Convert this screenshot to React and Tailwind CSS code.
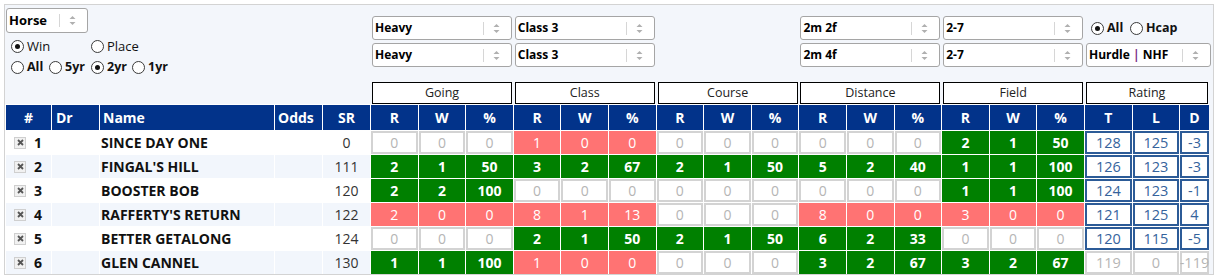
import React from 'react';

const rows = [
  {
    n: 1, name: 'SINCE DAY ONE', sr: 0,
    stats: [['n', 0, 0, 0], ['r', 1, 0, 0], ['n', 0, 0, 0], ['n', 0, 0, 0], ['g', 2, 1, 50]],
    rating: [128, 125, -3], muted: false,
  },
  {
    n: 2, name: "FINGAL'S HILL", sr: 111,
    stats: [['g', 2, 1, 50], ['g', 3, 2, 67], ['g', 2, 1, 50], ['g', 5, 2, 40], ['g', 1, 1, 100]],
    rating: [126, 123, -3], muted: false,
  },
  {
    n: 3, name: 'BOOSTER BOB', sr: 120,
    stats: [['g', 2, 2, 100], ['n', 0, 0, 0], ['n', 0, 0, 0], ['n', 0, 0, 0], ['g', 1, 1, 100]],
    rating: [124, 123, -1], muted: false,
  },
  {
    n: 4, name: "RAFFERTY'S RETURN", sr: 122,
    stats: [['r', 2, 0, 0], ['r', 8, 1, 13], ['n', 0, 0, 0], ['r', 8, 0, 0], ['r', 3, 0, 0]],
    rating: [121, 125, 4], muted: false,
  },
  {
    n: 5, name: 'BETTER GETALONG', sr: 124,
    stats: [['n', 0, 0, 0], ['g', 2, 1, 50], ['g', 2, 1, 50], ['g', 6, 2, 33], ['n', 0, 0, 0]],
    rating: [120, 115, -5], muted: false,
  },
  {
    n: 6, name: 'GLEN CANNEL', sr: 130,
    stats: [['g', 1, 1, 100], ['r', 1, 0, 0], ['n', 0, 0, 0], ['g', 3, 2, 67], ['g', 3, 2, 67]],
    rating: [119, 0, -119], muted: true,
  },
];

const groups = ['Going', 'Class', 'Course', 'Distance', 'Field'];

const Arrows = () => (
  <svg width="7" height="11" viewBox="0 0 7 11">
    <polygon points="3.5,1 6.5,4 0.5,4" fill="#b0b0b0" />
    <polygon points="0.5,7 6.5,7 3.5,10" fill="#b0b0b0" />
  </svg>
);

const Select = ({ className, children }) => (
  <div className={`flex items-center bg-white border border-[#a5a5a5] rounded-[3px] font-bold text-black ${className}`}>
    <span className="flex-1 pl-[2px] whitespace-nowrap overflow-hidden">{children}</span>
    <span className="w-px h-[13px] bg-[#d6d6d6]" />
    <span className="w-[27px] flex pl-[9px]"><Arrows /></span>
  </div>
);

const Radio = ({ checked }) => (
  <span className="w-[13px] h-[13px] rounded-full border border-[#3a3a3a] bg-white flex items-center justify-center shrink-0">
    {checked && <span className="w-[5px] h-[5px] rounded-full bg-[#111]" />}
  </span>
);

const RadioLabel = ({ checked, label, className }) => (
  <label className={`flex items-center gap-[3px] ${className}`}>
    <Radio checked={checked} />
    <span>{label}</span>
  </label>
);

const CheckX = () => (
  <span className="w-[12px] h-[12px] border border-[#cfcfcf] bg-[#f1f1f1] flex items-center justify-center">
    <svg width="7" height="7" viewBox="0 0 7 7">
      <path d="M1 1 L6 6 M6 1 L1 6" stroke="#555" strokeWidth="1.8" />
    </svg>
  </span>
);

const Stat = ({ type, v }) => {
  const cls =
    type === 'g'
      ? 'bg-[#008000] border-[#008000] text-white font-bold'
      : type === 'r'
      ? 'bg-[#ff7373] border-[#ff7373] text-white'
      : 'bg-white border-[#d3d3d3] text-[#b5b5b5]';
  return (
    <td className="pl-[1px] pt-[1px] bg-white">
      <div className={`h-[23px] border-2 flex items-center justify-center text-[14px] ${cls}`}>{v}</div>
    </td>
  );
};

const Rating = ({ v, muted }) => (
  <td className="pl-[1px] pt-[1px] bg-white">
    <div
      className={`h-[23px] border-2 flex items-center justify-center text-[14.5px] bg-white ${
        muted ? 'border-[#d3d3d3] text-[#b5b5b5]' : 'border-[#2c5b97] text-[#35639c]'
      }`}
    >
      {v}
    </div>
  </td>
);

const Head = ({ children, className = 'justify-center' }) => (
  <td className="pl-[1px] pt-[1px] bg-white">
    <div className={`h-[25px] bg-[#02338a] text-white font-bold text-[14px] flex items-center ${className}`}>{children}</div>
  </td>
);

export default function App() {
  return (
    <div className="w-[1219px] h-[279px] bg-white pt-[4px] pl-[4px] font-['Open_Sans',sans-serif] text-[#111]">
      <div className="w-[1210px] border border-[#d3d3d3] bg-[#f3f6fb]">
        {/* Filters */}
        <div className="flex h-[77px]">
          <div className="w-[365px] pt-[3px] pl-[1px]">
            <Select className="w-[82px] h-[25px] text-[13px]">Horse</Select>
            <div className="flex items-center text-[13px] mt-[7px] pl-[5px] h-[13px]">
              <RadioLabel checked label="Win" className="w-[80px]" />
              <RadioLabel label="Place" />
            </div>
            <div className="flex items-center text-[12.5px] font-bold mt-[8px] pl-[5px] h-[13px]">
              <RadioLabel label="All" className="w-[38px]" />
              <RadioLabel label="5yr" className="w-[42px]" />
              <RadioLabel checked label="2yr" className="w-[41px]" />
              <RadioLabel label="1yr" />
            </div>
          </div>
          <div className="w-[142.8px] pt-[11px] pl-[2px] flex flex-col gap-[3px]">
            <Select className="w-[140px] h-[24px] text-[12px]">Heavy</Select>
            <Select className="w-[140px] h-[24px] text-[12px]">Heavy</Select>
          </div>
          <div className="w-[142.8px] pt-[11px] pl-[2px] flex flex-col gap-[3px]">
            <Select className="w-[140px] h-[24px] text-[12px]">Class 3</Select>
            <Select className="w-[140px] h-[24px] text-[12px]">Class 3</Select>
          </div>
          <div className="w-[142.8px]" />
          <div className="w-[142.8px] pt-[11px] pl-[2px] flex flex-col gap-[3px]">
            <Select className="w-[140px] h-[24px] text-[12px]">2m 2f</Select>
            <Select className="w-[140px] h-[24px] text-[12px]">2m 4f</Select>
          </div>
          <div className="w-[142.8px] pt-[11px] pl-[2px] flex flex-col gap-[3px]">
            <Select className="w-[140px] h-[24px] text-[12px]">2-7</Select>
            <Select className="w-[140px] h-[24px] text-[12px]">2-7</Select>
          </div>
          <div className="w-[128px] pt-[11px] pl-[2px] flex flex-col gap-[3px]">
            <div className="h-[24px] flex items-center text-[12.5px] font-bold pl-[5px]">
              <RadioLabel checked label="All" className="w-[39px]" />
              <RadioLabel label="Hcap" />
            </div>
            <Select className="w-[125px] h-[24px] text-[12px]">
              Hurdle <span className="text-[#7a2a86]">|</span> NHF
            </Select>
          </div>
        </div>

        {/* Group headers */}
        <div className="flex h-[22px]">
          <div className="w-[365px]" />
          {groups.map((g) => (
            <div key={g} className="w-[142.8px] pl-[2px]">
              <div className="w-[140px] h-[22px] border border-black bg-white flex items-center justify-center text-[12.5px] text-[#222]">
                {g}
              </div>
            </div>
          ))}
          <div className="pl-[2px]">
            <div className="w-[122px] h-[22px] border border-black bg-white flex items-center justify-center text-[12.5px] text-[#222]">
              Rating
            </div>
          </div>
        </div>

        {/* Table */}
        <table className="table-fixed border-separate border-spacing-0 w-[1204px]">
          <colgroup>
            <col className="w-[46px]" />
            <col className="w-[48px]" />
            <col className="w-[175px]" />
            <col className="w-[48px]" />
            <col className="w-[48px]" />
            {Array.from({ length: 15 }).map((_, i) => (
              <col key={i} className="w-[47.6px]" />
            ))}
            <col className="w-[48px]" />
            <col className="w-[47px]" />
            <col className="w-[30px]" />
          </colgroup>
          <thead>
            <tr>
              <Head>#</Head>
              <Head className="pl-[4px]">Dr</Head>
              <Head className="pl-[3px]">Name</Head>
              <Head className="pl-[3px]">Odds</Head>
              <Head>SR</Head>
              {groups.map((g) => (
                <React.Fragment key={g}>
                  <Head>R</Head>
                  <Head>W</Head>
                  <Head>%</Head>
                </React.Fragment>
              ))}
              <Head>T</Head>
              <Head>L</Head>
              <Head>D</Head>
            </tr>
          </thead>
          <tbody>
            {rows.map((r, idx) => {
              const bg = idx % 2 === 1 ? 'bg-[#f2f6fc]' : 'bg-white';
              return (
                <tr key={r.n}>
                  <td className="pl-[1px] pt-[1px] bg-white">
                    <div className={`h-[23px] flex items-center pl-[8px] gap-[8px] font-bold text-[14px] ${bg}`}>
                      <CheckX />
                      <span>{r.n}</span>
                    </div>
                  </td>
                  <td className="pl-[1px] pt-[1px] bg-white">
                    <div className={`h-[23px] ${bg}`} />
                  </td>
                  <td className="pl-[1px] pt-[1px] bg-white">
                    <div className={`h-[23px] flex items-center pl-[1px] font-bold text-[14px] whitespace-nowrap ${bg}`}>{r.name}</div>
                  </td>
                  <td className="pl-[1px] pt-[1px] bg-white">
                    <div className={`h-[23px] ${bg}`} />
                  </td>
                  <td className="pl-[1px] pt-[1px] bg-white">
                    <div className={`h-[23px] flex items-center justify-center text-[14px] text-[#333] ${bg}`}>{r.sr}</div>
                  </td>
                  {r.stats.map(([type, a, b, c], gi) => (
                    <React.Fragment key={gi}>
                      <Stat type={type} v={a} />
                      <Stat type={type} v={b} />
                      <Stat type={type} v={c} />
                    </React.Fragment>
                  ))}
                  {r.rating.map((v, ri) => (
                    <Rating key={ri} v={v} muted={r.muted} />
                  ))}
                </tr>
              );
            })}
          </tbody>
        </table>
      </div>
    </div>
  );
}
